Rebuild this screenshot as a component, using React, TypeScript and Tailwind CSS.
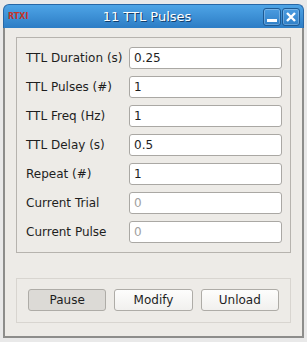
import React from 'react'

const fields = [
  { label: 'TTL Duration (s)', value: '0.25' },
  { label: 'TTL Pulses (#)', value: '1' },
  { label: 'TTL Freq (Hz)', value: '1' },
  { label: 'TTL Delay (s)', value: '0.5' },
  { label: 'Repeat (#)', value: '1' },
  { label: 'Current Trial', value: '0', disabled: true },
  { label: 'Current Pulse', value: '0', disabled: true },
]

const TitleButton = ({ children }: { children: React.ReactNode }) => (
  <div className="w-[18px] h-[18px] rounded-[3px] border border-[#1d5a94] bg-gradient-to-b from-[#4a9be0] to-[#2f80c8] shadow-[inset_0_0_0_1px_rgba(255,255,255,0.25)] flex items-center justify-center">
    {children}
  </div>
)

export default function App() {
  return (
    <div className="w-[307px] h-[342px] bg-[#e9e9e9] pt-[4px] px-[3px] pb-[4px] font-['DejaVu_Sans',sans-serif]">
      <div className="flex flex-col h-full">
        {/* title bar */}
        <div className="h-[24px] shrink-0 flex items-center rounded-t-[6px] border border-b-0 border-[#2767a6] bg-gradient-to-b from-[#4ea4e6] to-[#2c7dc5]">
          <div className="w-[27px] pl-[4px] text-[8px] font-bold text-[#c4342a] leading-none">RTXI</div>
          <div className="flex-1 text-center text-white text-[13px] [text-shadow:1px_1px_0_#143f6b]">11 TTL Pulses</div>
          <div className="flex gap-[1px] pr-[3px] pt-[1px]">
            <TitleButton>
              <div className="w-[10px] h-[3px] bg-white mt-[7px]" />
            </TitleButton>
            <TitleButton>
              <svg width="12" height="12" viewBox="0 0 12 12">
                <path d="M2 2 L10 10 M10 2 L2 10" stroke="white" strokeWidth="2.4" />
              </svg>
            </TitleButton>
          </div>
        </div>

        {/* body */}
        <div className="flex-1 flex flex-col bg-[#edebe7] border-x-2 border-b-2 border-[#8d8d8b] px-[11px] pt-[9px] pb-[12px]">
          <div className="border border-[#b6b3ae] pl-[9px] pr-[8px] py-[9px] flex flex-col gap-[7px]">
            {fields.map((f) => (
              <div key={f.label} className="flex items-center h-[22px]">
                <div className="w-[103px] text-[12px] text-[#1e1e1e]">{f.label}</div>
                <div
                  className={
                    'flex-1 h-[22px] rounded-[3px] border border-[#aaa8a4] bg-white pl-[4px] flex items-center text-[12px] ' +
                    (f.disabled ? 'text-[#a0a0a0]' : 'text-[#1e1e1e]')
                  }
                >
                  {f.value}
                </div>
              </div>
            ))}
          </div>

          <div className="mt-[25px] border border-[#d8d5d0] px-[11px] pt-[10px] pb-[11px] flex gap-[8px]">
            <button className="flex-1 h-[22px] rounded-[3px] border border-[#aeaca7] bg-[#dcdad6] text-[12px] text-[#1e1e1e]">
              Pause
            </button>
            <button className="flex-1 h-[22px] rounded-[3px] border border-[#aeaca7] bg-gradient-to-b from-[#fdfdfc] to-[#f1f0ee] text-[12px] text-[#1e1e1e]">
              Modify
            </button>
            <button className="flex-1 h-[22px] rounded-[3px] border border-[#aeaca7] bg-gradient-to-b from-[#fdfdfc] to-[#f1f0ee] text-[12px] text-[#1e1e1e]">
              Unload
            </button>
          </div>
        </div>
      </div>
    </div>
  )
}
